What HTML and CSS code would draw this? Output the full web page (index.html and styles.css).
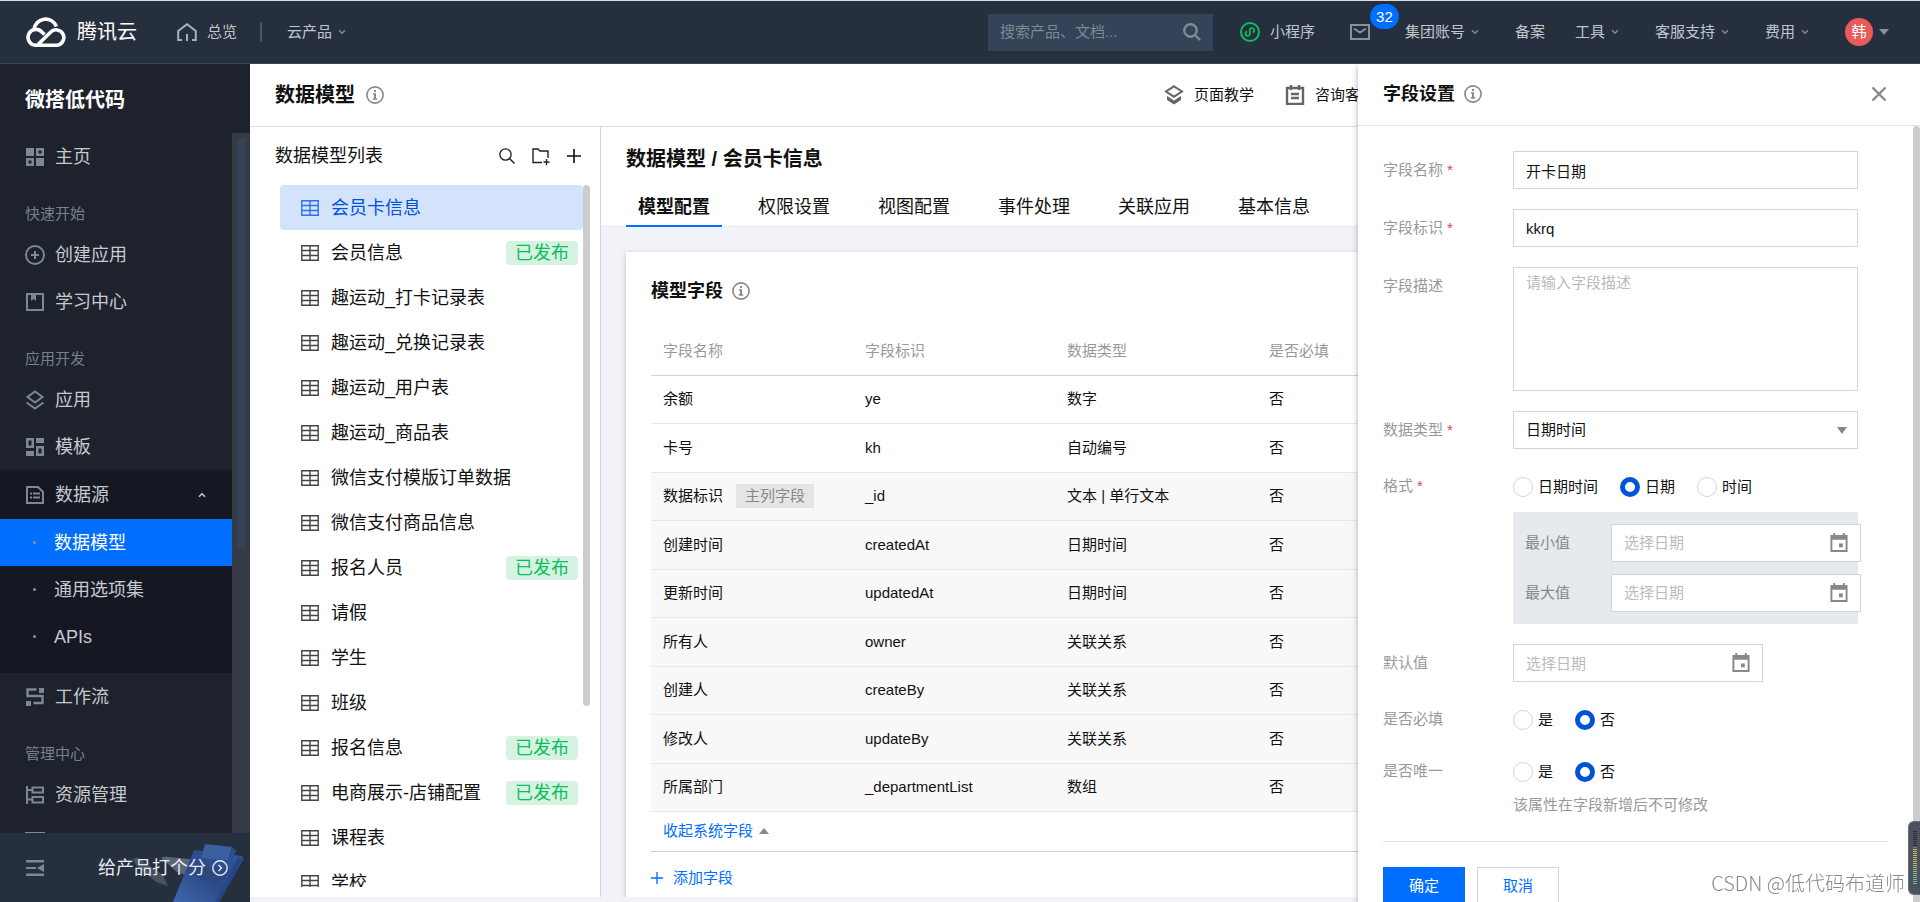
FILE: index.html
```html
<!DOCTYPE html>
<html lang="zh-CN">
<head>
<meta charset="utf-8">
<title>数据模型 - 微搭低代码</title>
<link rel="stylesheet" href="styles.css">
</head>
<body>
<svg class="sprite" aria-hidden="true">
  <symbol id="i-info" viewBox="0 0 18 18"><circle cx="9" cy="9" r="8.1" fill="none" stroke="currentColor" stroke-width="1.6"/><path d="M8 4h2v2H8zM7 7.3h3v5h1.2v1.4H6.8v-1.4H8V8.7H7z" fill="currentColor"/></symbol>
  <symbol id="i-chev" viewBox="0 0 8 6"><path d="M1 1.2l3 3 3-3" fill="none" stroke="currentColor" stroke-width="1.6"/></symbol>
  <symbol id="i-table" viewBox="0 0 18 16"><path d="M.8.8h16.4v14.4H.8zM.8 5.5h16.4M.8 10.5h16.4M9 .8v14.4" fill="none" stroke="currentColor" stroke-width="1.4"/></symbol>
  <symbol id="i-cal" viewBox="0 0 18 20"><path d="M0 2h3V0h2v2h8V0h2v2h3v18H0zM2 7v11h14V7z" fill="currentColor" fill-rule="evenodd"/><path d="M9 11h4v4H9z" fill="currentColor"/></symbol>
  <symbol id="i-plus" viewBox="0 0 14 14"><path d="M7 0v14M0 7h14" fill="none" stroke="currentColor" stroke-width="1.6"/></symbol>
</svg>

<header class="topbar">
  <a class="brand" href="#">
    <svg width="42" height="30" viewBox="0 0 42 30" fill="none" stroke="#fff" stroke-width="3.6"><path d="M19.5 17.5L16.8 15A7.9 7.9 0 1 0 10.500 28.200H31.500A7.700 7.700 0 1 0 25.500 15.200L13 27.500"/><path d="M9 12.500A11.700 11.700 0 0 1 31.500 9.500"/></svg>
    <span>腾讯云</span>
  </a>
  <a class="topbar__link topbar__home" href="#">
    <svg width="20" height="18" viewBox="0 0 20 18" fill="none" stroke="#a9b0b6" stroke-width="2"><path d="M5 17H1.200V8L10 1.200 18.800 8v9H15M10 11v7"/></svg>
    <span>总览</span>
  </a>
  <span class="topbar__divider"></span>
  <a class="topbar__link topbar__products" href="#">云产品<svg class="chev"><use href="#i-chev"/></svg></a>
  <label class="search">
    <input type="search" placeholder="搜索产品、文档..." aria-label="搜索产品、文档">
    <svg width="18" height="18" viewBox="0 0 18 18" fill="none" stroke="#7f8a94" stroke-width="2.400"><circle cx="7.500" cy="7.500" r="6.200"/><path d="M12 12l5 5"/></svg>
  </label>
  <nav class="topbar__nav">
    <a class="topbar__link" href="#"><svg width="20" height="20" viewBox="0 0 20 20" fill="none" stroke="#0abf5b" stroke-width="2"><circle cx="10" cy="10" r="9"/><path d="M7.200 9.600a2.200 2.200 0 1 0 2.600 2.400V8a2.200 2.200 0 1 1 2.800 2.300" stroke-width="1.700"/></svg><span class="mini">小程序</span></a>
    <a class="topbar__mail" href="#" aria-label="消息"><svg width="20" height="16" viewBox="0 0 20 16" fill="none" stroke="#87919a" stroke-width="2"><path d="M1 1h18v14H1zM4 4.500l6 4 6-4"/></svg><span class="count">32</span></a>
    <a class="topbar__link" href="#">集团账号<svg class="chev"><use href="#i-chev"/></svg></a>
    <a class="topbar__link topbar__link--plain" href="#">备案</a>
    <a class="topbar__link" href="#">工具<svg class="chev"><use href="#i-chev"/></svg></a>
    <a class="topbar__link" href="#">客服支持<svg class="chev"><use href="#i-chev"/></svg></a>
    <a class="topbar__link" href="#">费用<svg class="chev"><use href="#i-chev"/></svg></a>
    <button class="user" type="button"><span class="user__avatar">韩</span><svg width="10" height="6" viewBox="0 0 10 6"><path d="M0 0h10L5 6z" fill="#888f97"/></svg></button>
  </nav>
</header>

<div class="shell">
  <aside class="side">
    <h1 class="side__title">微搭低代码</h1>
    <div class="side__scroll">
      <nav class="side__nav">
        <a class="item" href="#"><svg class="ico" viewBox="0 0 20 20"><path fill="currentColor" fill-rule="evenodd" d="M1 1h8v8H1zM11 1h8v8h-8zM13.500 3.500v3h3v-3zM1 11h8v8H1zM3.500 13.500v3h3v-3zM11 11h8v8h-8z"/></svg>主页</a>
        <h2 class="group">快速开始</h2>
        <a class="item" href="#"><svg class="ico" viewBox="0 0 20 20" fill="none" stroke="currentColor" stroke-width="2"><circle cx="10" cy="10" r="9"/><path d="M10 6v8M6 10h8"/></svg>创建应用</a>
        <a class="item" href="#"><svg class="ico" viewBox="0 0 20 20" fill="none" stroke="currentColor" stroke-width="2"><path d="M2 2h16v16H2z"/><path d="M6 3h5v6L8.500 7 6 9z" fill="currentColor" stroke="none"/></svg>学习中心</a>
        <h2 class="group">应用开发</h2>
        <a class="item" href="#"><svg class="ico" viewBox="0 0 20 20" fill="none" stroke="currentColor" stroke-width="2"><path d="M10 1.500l7.500 5.500-7.500 5.500L2.500 7zM1.500 12.500L10 18.500l8.500-6"/></svg>应用</a>
        <a class="item" href="#"><svg class="ico" viewBox="0 0 20 20"><path fill="currentColor" fill-rule="evenodd" d="M1 1h8v10H1zM3.500 3.500v5h3v-5zM11 1h8v5h-8zM1 14h8v5H1zM11 9h8v10h-8zM13.500 11.500v5h3v-5z"/></svg>模板</a>
        <div class="submenu">
          <a class="item item--parent" href="#"><svg class="ico" viewBox="0 0 20 20" fill="none" stroke="currentColor" stroke-width="2"><path d="M2 2h11l5 5v11H2z"/><path d="M5 8.500h2M8 8.500h7M5 12.500h2M8 12.500h7"/></svg>数据源<svg class="chev chev--up"><use href="#i-chev"/></svg></a>
          <a class="item item--sub item--on" href="#">数据模型</a>
          <a class="item item--sub" href="#">通用选项集</a>
          <a class="item item--sub" href="#">APIs</a>
        </div>
        <a class="item" href="#"><svg class="ico" viewBox="0 0 20 20"><path fill="currentColor" d="M14 1h5v5h-5zM1 14h5v5H1z"/><path d="M11.500 2.500h-9v6.500h15v7H8.500" fill="none" stroke="currentColor" stroke-width="2.400"/></svg>工作流</a>
        <h2 class="group">管理中心</h2>
        <a class="item" href="#"><svg class="ico" viewBox="0 0 20 20" fill="none" stroke="currentColor" stroke-width="2"><path d="M2 1v18M2 5h5M2 14.500h5M7.500 2.500h10.500v5H7.500zM7.500 12h10.500v5.500H7.500z"/></svg>资源管理</a>
        <a class="item" href="#" aria-label="更多"><svg class="ico" viewBox="0 0 20 20"><path fill="currentColor" d="M0 0h20v2H0z"/></svg></a>
      </nav>
      <div class="side__track"><span class="side__thumb"></span></div>
    </div>
    <footer class="side__foot">
      <svg class="side__art" width="130" height="69" viewBox="0 0 130 69" aria-hidden="true">
        <defs><linearGradient id="board" x1="0" y1="1" x2="1" y2="0"><stop offset="0" stop-color="#3f66ad"/><stop offset=".5" stop-color="#2b4a85"/><stop offset="1" stop-color="#33589f"/></linearGradient></defs>
        <path d="M13 26q4-3 8 1l22 15 5 11-12-4-20-17z" fill="#465162"/>
        <path d="M41 25q3-2 8-1l30 3-6 18-16-6z" fill="#5a6577"/>
        <path d="M74 17l47 6q3 1 2 4L99 69H53z" fill="url(#board)"/>
        <path d="M118 24l5 2-24 43h-4z" fill="#264785"/>
        <path d="M76 33l34 3-5 10q-20 4-33-4z" fill="#2b487f"/>
        <path d="M85 11l27 3-4 13-27-2z" fill="#3c5f9f"/>
        <path d="M112 14l4 4-4 10-4-1z" fill="#2c4d8c"/>
      </svg>
      <button class="fold" type="button" aria-label="收起菜单"><svg class="ico" viewBox="0 0 20 20"><path d="M1 2h18v2.500H1zM1 9h10v2H1zM1 15.500h18V18H1zM12 10l7-4v8z" fill="currentColor"/></svg></button>
      <a class="rate" href="#">给产品打个分<svg width="16" height="16" viewBox="0 0 16 16" fill="none" stroke="#e6eaf0" stroke-width="1.400"><circle cx="8" cy="8" r="7.200"/><path d="M6.500 5l3 3-3 3"/></svg></a>
    </footer>
  </aside>

  <div class="page">
    <div class="page__head">
      <h2 class="h20">数据模型</h2><svg class="info"><use href="#i-info"/></svg>
      <div class="page__links">
        <a href="#"><svg width="20" height="20" viewBox="0 0 20 20"><path d="M10 1.300l8 5.200-8 5.200-8-5.200z" fill="none" stroke="#666" stroke-width="2"/><path d="M3 11l7 4.500 7-4.500v4L10 19.500 3 15z" fill="#666"/></svg>页面教学</a>
        <a href="#"><svg width="20" height="20" viewBox="0 0 20 20" fill="none" stroke="#666" stroke-width="2.400"><path d="M2 3h16v16H2zM6 0v5M14 0v5M6 9h8M6 13h8"/></svg>咨询客服</a>
      </div>
    </div>
    <div class="page__body">
      <section class="models">
        <div class="models__head">
          <h3>数据模型列表</h3>
          <button type="button" aria-label="搜索"><svg width="16" height="16" viewBox="0 0 16 16" fill="none" stroke="#222" stroke-width="1.400"><circle cx="6.500" cy="6.500" r="5.600"/><path d="M10.500 10.500l5 5"/></svg></button>
          <button type="button" aria-label="新建文件夹"><svg width="18" height="17" viewBox="0 0 18 17" fill="none" stroke="#222" stroke-width="1.400"><path d="M10 14.500H1V1h5l2 2h8v7M14.500 11v6M11.500 14h6"/></svg></button>
          <button type="button" aria-label="新建"><svg width="14" height="14"><use href="#i-plus"/></svg></button>
        </div>
        <div class="models__scroll">
          <ul class="models__list">
            <li class="on"><svg><use href="#i-table"/></svg><a href="#">会员卡信息</a></li>
            <li><svg><use href="#i-table"/></svg><a href="#">会员信息</a><span class="tag">已发布</span></li>
            <li><svg><use href="#i-table"/></svg><a href="#">趣运动_打卡记录表</a></li>
            <li><svg><use href="#i-table"/></svg><a href="#">趣运动_兑换记录表</a></li>
            <li><svg><use href="#i-table"/></svg><a href="#">趣运动_用户表</a></li>
            <li><svg><use href="#i-table"/></svg><a href="#">趣运动_商品表</a></li>
            <li><svg><use href="#i-table"/></svg><a href="#">微信支付模版订单数据</a></li>
            <li><svg><use href="#i-table"/></svg><a href="#">微信支付商品信息</a></li>
            <li><svg><use href="#i-table"/></svg><a href="#">报名人员</a><span class="tag">已发布</span></li>
            <li><svg><use href="#i-table"/></svg><a href="#">请假</a></li>
            <li><svg><use href="#i-table"/></svg><a href="#">学生</a></li>
            <li><svg><use href="#i-table"/></svg><a href="#">班级</a></li>
            <li><svg><use href="#i-table"/></svg><a href="#">报名信息</a><span class="tag">已发布</span></li>
            <li><svg><use href="#i-table"/></svg><a href="#">电商展示-店铺配置</a><span class="tag">已发布</span></li>
            <li><svg><use href="#i-table"/></svg><a href="#">课程表</a></li>
            <li><svg><use href="#i-table"/></svg><a href="#">学校</a></li>
          </ul>
          <span class="models__thumb"></span>
        </div>
      </section>

      <main class="detail">
        <div class="detail__head">
          <h2 class="h20">数据模型 / 会员卡信息</h2>
          <nav class="tabs">
            <a class="on" href="#">模型配置</a><a href="#">权限设置</a><a href="#">视图配置</a><a href="#">事件处理</a><a href="#">关联应用</a><a href="#">基本信息</a>
          </nav>
        </div>
        <section class="card">
          <div class="card__head"><h3>模型字段</h3><svg class="info"><use href="#i-info"/></svg></div>
          <table class="fields">
            <thead><tr><th>字段名称</th><th>字段标识</th><th>数据类型</th><th>是否必填</th></tr></thead>
            <tbody>
              <tr><td>余额</td><td>ye</td><td>数字</td><td>否</td></tr>
              <tr><td>卡号</td><td>kh</td><td>自动编号</td><td>否</td></tr>
              <tr class="sys"><td>数据标识<span class="key">主列字段</span></td><td>_id</td><td>文本 | 单行文本</td><td>否</td></tr>
              <tr class="sys"><td>创建时间</td><td>createdAt</td><td>日期时间</td><td>否</td></tr>
              <tr class="sys"><td>更新时间</td><td>updatedAt</td><td>日期时间</td><td>否</td></tr>
              <tr class="sys"><td>所有人</td><td>owner</td><td>关联关系</td><td>否</td></tr>
              <tr class="sys"><td>创建人</td><td>createBy</td><td>关联关系</td><td>否</td></tr>
              <tr class="sys"><td>修改人</td><td>updateBy</td><td>关联关系</td><td>否</td></tr>
              <tr class="sys"><td>所属部门</td><td>_departmentList</td><td>数组</td><td>否</td></tr>
            </tbody>
          </table>
          <button class="collapse" type="button">收起系统字段<svg width="10" height="6" viewBox="0 0 10 6"><path d="M0 6h10L5 0z" fill="#888"/></svg></button>
          <button class="add" type="button"><svg width="12" height="12"><use href="#i-plus"/></svg>添加字段</button>
        </section>
      </main>
    </div>
  </div>

  <form class="drawer">
    <div class="drawer__head">
      <h2>字段设置</h2><svg class="info"><use href="#i-info"/></svg>
      <button type="button" aria-label="关闭"><svg width="16" height="16" viewBox="0 0 16 16" fill="none" stroke="#888" stroke-width="2.400"><path d="M1.500 1.500l13 13M14.500 1.500l-13 13"/></svg></button>
    </div>
    <div class="drawer__scroll">
      <div class="drawer__body">
        <div class="row"><label class="lab req" for="f-name">字段名称</label><input class="ctl" id="f-name" type="text" value="开卡日期"></div>
        <div class="row"><label class="lab req" for="f-key">字段标识</label><input class="ctl" id="f-key" type="text" value="kkrq"></div>
        <div class="row"><label class="lab" for="f-desc">字段描述</label><textarea class="ctl ctl--area" id="f-desc" placeholder="请输入字段描述"></textarea></div>
        <div class="row"><label class="lab req" for="f-type">数据类型</label>
          <div class="pick"><select class="ctl" id="f-type"><option>日期时间</option></select><svg width="10" height="7" viewBox="0 0 10 7"><path d="M0 0h10L5 7z" fill="#888"/></svg></div></div>
        <div class="row"><span class="lab lab--low req" id="l-fmt">格式</span>
          <div class="stack">
            <div class="radios" role="radiogroup" aria-labelledby="l-fmt">
              <label><input type="radio" name="fmt">日期时间</label><label><input type="radio" name="fmt" checked>日期</label><label><input type="radio" name="fmt">时间</label>
            </div>
            <div class="range">
              <label for="f-min">最小值</label><div class="date"><input class="ctl" id="f-min" type="text" placeholder="选择日期"><svg><use href="#i-cal"/></svg></div>
              <label for="f-max">最大值</label><div class="date"><input class="ctl" id="f-max" type="text" placeholder="选择日期"><svg><use href="#i-cal"/></svg></div>
            </div>
          </div></div>
        <div class="row"><label class="lab" for="f-def">默认值</label><div class="date"><input class="ctl" id="f-def" type="text" placeholder="选择日期"><svg><use href="#i-cal"/></svg></div></div>
        <div class="row"><span class="lab lab--low" id="l-req">是否必填</span>
          <div class="radios" role="radiogroup" aria-labelledby="l-req"><label><input type="radio" name="req">是</label><label><input type="radio" name="req" checked>否</label></div></div>
        <div class="row"><span class="lab lab--low" id="l-uni">是否唯一</span>
          <div class="stack">
            <div class="radios" role="radiogroup" aria-labelledby="l-uni"><label><input type="radio" name="uni">是</label><label><input type="radio" name="uni" checked>否</label></div>
            <p class="hint">该属性在字段新增后不可修改</p>
          </div></div>
        <div class="actions"><button class="btn btn--main" type="submit">确定</button><button class="btn" type="button">取消</button></div>
      </div>
      <span class="drawer__thumb"></span>
    </div>
  </form>
</div>
<div class="mark">CSDN @低代码布道师</div>
<div class="meter"><span></span></div>
</body>
</html>
```
FILE: styles.css
```css
* { box-sizing: border-box; }
body {
  margin: 0;
  height: 100vh;
  display: flex;
  flex-direction: column;
  overflow: hidden;
  font: 15px/24px "Liberation Sans", "Noto Sans CJK SC", sans-serif;
  color: #111;
  background: #f2f3f8;
}
h1, h2, h3, p, ul { margin: 0; padding: 0; font-weight: normal; }
ul { list-style: none; }
a { color: inherit; text-decoration: none; }
button { border: 0; padding: 0; background: none; font: inherit; color: inherit; }
svg { flex: none; display: block; }
.sprite { position: absolute; width: 0; height: 0; }
.info { width: 18px; height: 18px; color: #888; }
.chev { width: 8px; height: 6px; margin-left: 6px; color: #7f8a94; }
.h20 { font-size: 20px; line-height: 30px; font-weight: bold; }

/* top bar */
.topbar {
  flex: none;
  display: flex;
  align-items: center;
  height: 64px;
  padding: 0 31px 0 25px;
  border-top: 1px solid #d5dfe2;
  border-bottom: 1px solid #36425a;
  background: #262f3e;
  color: #c1c6cb;
}
.brand { display: flex; align-items: center; gap: 10px; color: #fff; font-size: 20px; }
.topbar__link { display: flex; align-items: center; }
.topbar__link--plain { margin-right: -6px; }
.topbar__home { gap: 10px; margin-left: 40px; }
.topbar__divider { width: 2px; height: 20px; margin: 0 25px 0 23px; background: #4b535f; }
.search { display: flex; align-items: center; width: 225px; height: 37px; margin-left: auto; padding: 0 12px; background: #354359; }
.search input { flex: 1; min-width: 0; padding: 0; border: 0; outline: 0; background: none; font: inherit; color: #fff; appearance: none; }
.search input::placeholder { color: #808790; }
.topbar__nav { display: flex; align-items: center; gap: 36px; margin-left: 27px; }
.mini { margin: 0 -1px 0 10px; }
.topbar__mail { position: relative; margin-right: -1px; }
.count { position: absolute; left: 20px; top: -20px; width: 29px; height: 25px; border-radius: 13px; background: #006eff; color: #fff; line-height: 25px; text-align: center; }
.user { display: flex; align-items: center; gap: 6px; }
.user__avatar { width: 28px; height: 28px; border-radius: 50%; background: #e95b5b; color: #fff; line-height: 28px; text-align: center; }

.shell { flex: 1; min-height: 0; display: flex; position: relative; }

/* side menu */
.side { flex: none; width: 250px; display: flex; flex-direction: column; background: #1e222d; color: #c6cacf; }
.side__title { height: 69px; padding: 3px 0 0 25px; color: #fff; font-size: 20px; font-weight: bold; line-height: 66px; }
.side__scroll { flex: 1; min-height: 0; display: flex; }
.side__nav { flex: 1; overflow: hidden; }
.side__track { width: 18px; padding: 5px; background: #363a45; }
.side__thumb { display: block; width: 8px; height: 410px; background: #36425a; }
.ico { width: 20px; height: 20px; color: #7e8890; }
.item { display: flex; align-items: center; gap: 10px; height: 47px; padding-left: 25px; font-size: 18px; }
.group { height: 51px; padding: 17px 0 0 25px; font-size: 15px; line-height: 34px; color: #76818a; }
.submenu { padding-bottom: 13px; background: #151823; }
.item--parent { height: 49px; }
.item--parent .chev { margin: 0 26px 0 auto; color: #c6cacf; }
.chev--up { transform: rotate(180deg); }
.item--sub { gap: 18px; padding-left: 33px; }
.item--sub::before { content: ""; width: 3px; height: 3px; border-radius: 50%; background: #87919a; }
.item--on { background: #006eff; color: #fff; }
.side__foot { position: relative; flex: none; display: flex; align-items: center; height: 69px; padding: 0 22px 0 25px; background: #262f3d; }
.side__art { position: absolute; right: 0; bottom: 0; }
.fold { position: relative; }
.rate { position: relative; display: flex; align-items: center; gap: 6px; margin-left: auto; font-size: 18px; color: #e6eaf0; }

/* page */
.page { flex: 1; min-width: 0; display: flex; flex-direction: column; padding-bottom: 5px; }
.page__head { flex: none; display: flex; align-items: center; gap: 11px; height: 63px; padding-left: 25px; border-bottom: 1px solid #dcdcdc; background: #fff; }
.page__links { display: flex; gap: 31px; margin: 0 545px 0 auto; }
.page__links a { display: flex; align-items: center; gap: 10px; }
.page__body { flex: 1; min-height: 0; display: flex; }

/* model list */
.models { flex: none; width: 351px; display: flex; flex-direction: column; padding-bottom: 10px; border-right: 1px solid #cfd5de; background: #fff; }
.models__head { display: flex; align-items: center; gap: 17px; height: 58px; padding: 0 19px 0 25px; }
.models__head h3 { flex: 1; font-size: 18px; }
.models__scroll { flex: 1; min-height: 0; display: flex; overflow: hidden; padding: 0 10px 0 30px; }
.models__list { flex: 1; font-size: 18px; }
.models__list li { display: flex; align-items: center; height: 45px; padding: 0 5px 0 21px; border-radius: 4px; }
.models__list li svg { width: 18px; height: 16px; margin-right: 12px; color: #444; }
.models__list .on { background: #d4e3fc; color: #0052d9; }
.models__list .on svg { color: #2e72e3; }
.tag { margin-left: auto; width: 72px; height: 24px; border-radius: 4px; background: #d6f3e2; color: #0abf5b; text-align: center; }
.models__thumb { width: 7px; height: 521px; border-radius: 4px; background: #cdcdcd; }

/* detail */
.detail { flex: 1; min-width: 0; display: flex; flex-direction: column; overflow: hidden; }
.detail__head { flex: none; padding: 17px 25px 0; border-bottom: 1px solid #e5e8ed; background: #fff; }
.tabs { display: flex; gap: 24px; margin: 15px 0 -1px; font-size: 18px; }
.tabs a { padding: 6px 12px; border-bottom: 2px solid transparent; }
.tabs .on { border-color: #006eff; font-weight: bold; }
.card { flex: 1; margin: 25px 25px 0; padding: 26px 25px 0; background: #fff; box-shadow: 0 2px 5px rgba(54, 58, 80, .3); }
.card__head { display: flex; align-items: center; gap: 9px; height: 26px; }
.card__head h3 { font-size: 18px; font-weight: bold; }
.fields { width: 100%; margin-top: 23px; border-collapse: collapse; table-layout: fixed; }
.fields th, .fields td { height: 48px; padding: 0 12px; text-align: left; border-bottom: 1px solid #e5e7ea; }
.fields th { width: 202px; font-weight: normal; color: #999; border-color: #cfd5de; }
.fields th:last-child { width: auto; }
.fields tr:nth-child(even) td { height: 49px; }
.sys { background: #f8f8f8; }
.key { display: inline-block; margin-left: 13px; width: 78px; background: #e5e5e5; color: #888; text-align: center; }
.collapse { display: flex; align-items: center; gap: 6px; width: 100%; height: 40px; padding-left: 12px; border-bottom: 1px solid #cfd0d8; color: #006eff; }
.add { display: flex; align-items: center; gap: 10px; margin-top: 14px; color: #006eff; }

/* drawer */
.drawer {
  position: absolute;
  right: 0;
  top: 0;
  bottom: 0;
  width: 562px;
  display: flex;
  flex-direction: column;
  background: #fff;
  box-shadow: 0 2px 6px rgba(54, 58, 80, .4);
  clip-path: inset(0 0 0 -8px);
}
.drawer__head { flex: none; display: flex; align-items: center; gap: 9px; height: 62px; padding: 0 33px 2px 25px; border-bottom: 1px solid #e5e5e5; }
.drawer__head h2 { font-size: 18px; font-weight: bold; }
.drawer__head button { margin-left: auto; }
.drawer__scroll { flex: 1; min-height: 0; display: flex; overflow: hidden; }
.drawer__body { flex: 1; padding: 25px 25px 0; }
.drawer__thumb { width: 7px; background: #cdcdcd; border-radius: 4px 4px 0 0; }
.row { display: flex; align-items: flex-start; margin-bottom: 20px; }
.lab { flex: none; width: 130px; line-height: 38px; color: #999; }
.lab--low { line-height: 34px; height: 32px; }
.req::after { content: "*"; margin-left: 4px; color: #e54545; }
.ctl { display: block; width: 345px; height: 38px; padding: 0 12px; border: 1px solid #cfd5de; border-radius: 0; outline: 0; background: #fff; font: inherit; color: #111; appearance: none; }
.ctl::placeholder { color: #bbb; }
.ctl--area { height: 124px; padding: 3px 12px; resize: none; }
.pick, .date { position: relative; }
.pick svg { position: absolute; right: 11px; top: 16px; }
.date .ctl { width: 250px; }
.date svg { position: absolute; right: 13px; top: 9px; width: 18px; height: 19px; color: #888; }
.radios { display: flex; gap: 22px; height: 32px; padding-top: 4px; }
.radios label { display: flex; align-items: center; gap: 5px; }
.radios input { width: 20px; height: 20px; margin: 0; border: 1px solid #cfd5de; border-radius: 50%; background: #fff; appearance: none; }
.radios input:checked { border: 5px solid #0052d9; }
.range { display: grid; grid-template-columns: 86px 250px; row-gap: 12px; width: 345px; margin-top: 11px; padding: 12px 0 12px 12px; background: #e6e9ee; color: #888; line-height: 38px; }
.hint { margin-top: 7px; color: #999; }
.actions { display: flex; gap: 12px; margin-top: 24px; padding-top: 25px; border-top: 1px solid #e5e5e5; }
.btn { width: 82px; height: 38px; border: 1px solid #cfd5de; color: #006eff; }
.btn--main { border-color: #006eff; background: #006eff; color: #fff; }

/* overlays */
.mark { position: fixed; right: 15px; bottom: 4px; font-size: 20px; line-height: 30px; font-family: "Noto Sans CJK SC", sans-serif; font-weight: 300; color: #8a8a8a; }
.meter { position: fixed; right: 0; bottom: 7px; width: 12px; height: 74px; padding: 9px 3px 9px 4px; border: 1px solid #6a6e7c; border-right: 0; border-radius: 6px 0 0 6px; background: #4c5060; }
.meter span { display: block; height: 100%; background: repeating-linear-gradient(transparent 0 1px, #4c5060 1px 2px), linear-gradient(#2b2e3a 30%, #d9c14a 31%, #a8c45c 60%, #4fc49b); }
```
